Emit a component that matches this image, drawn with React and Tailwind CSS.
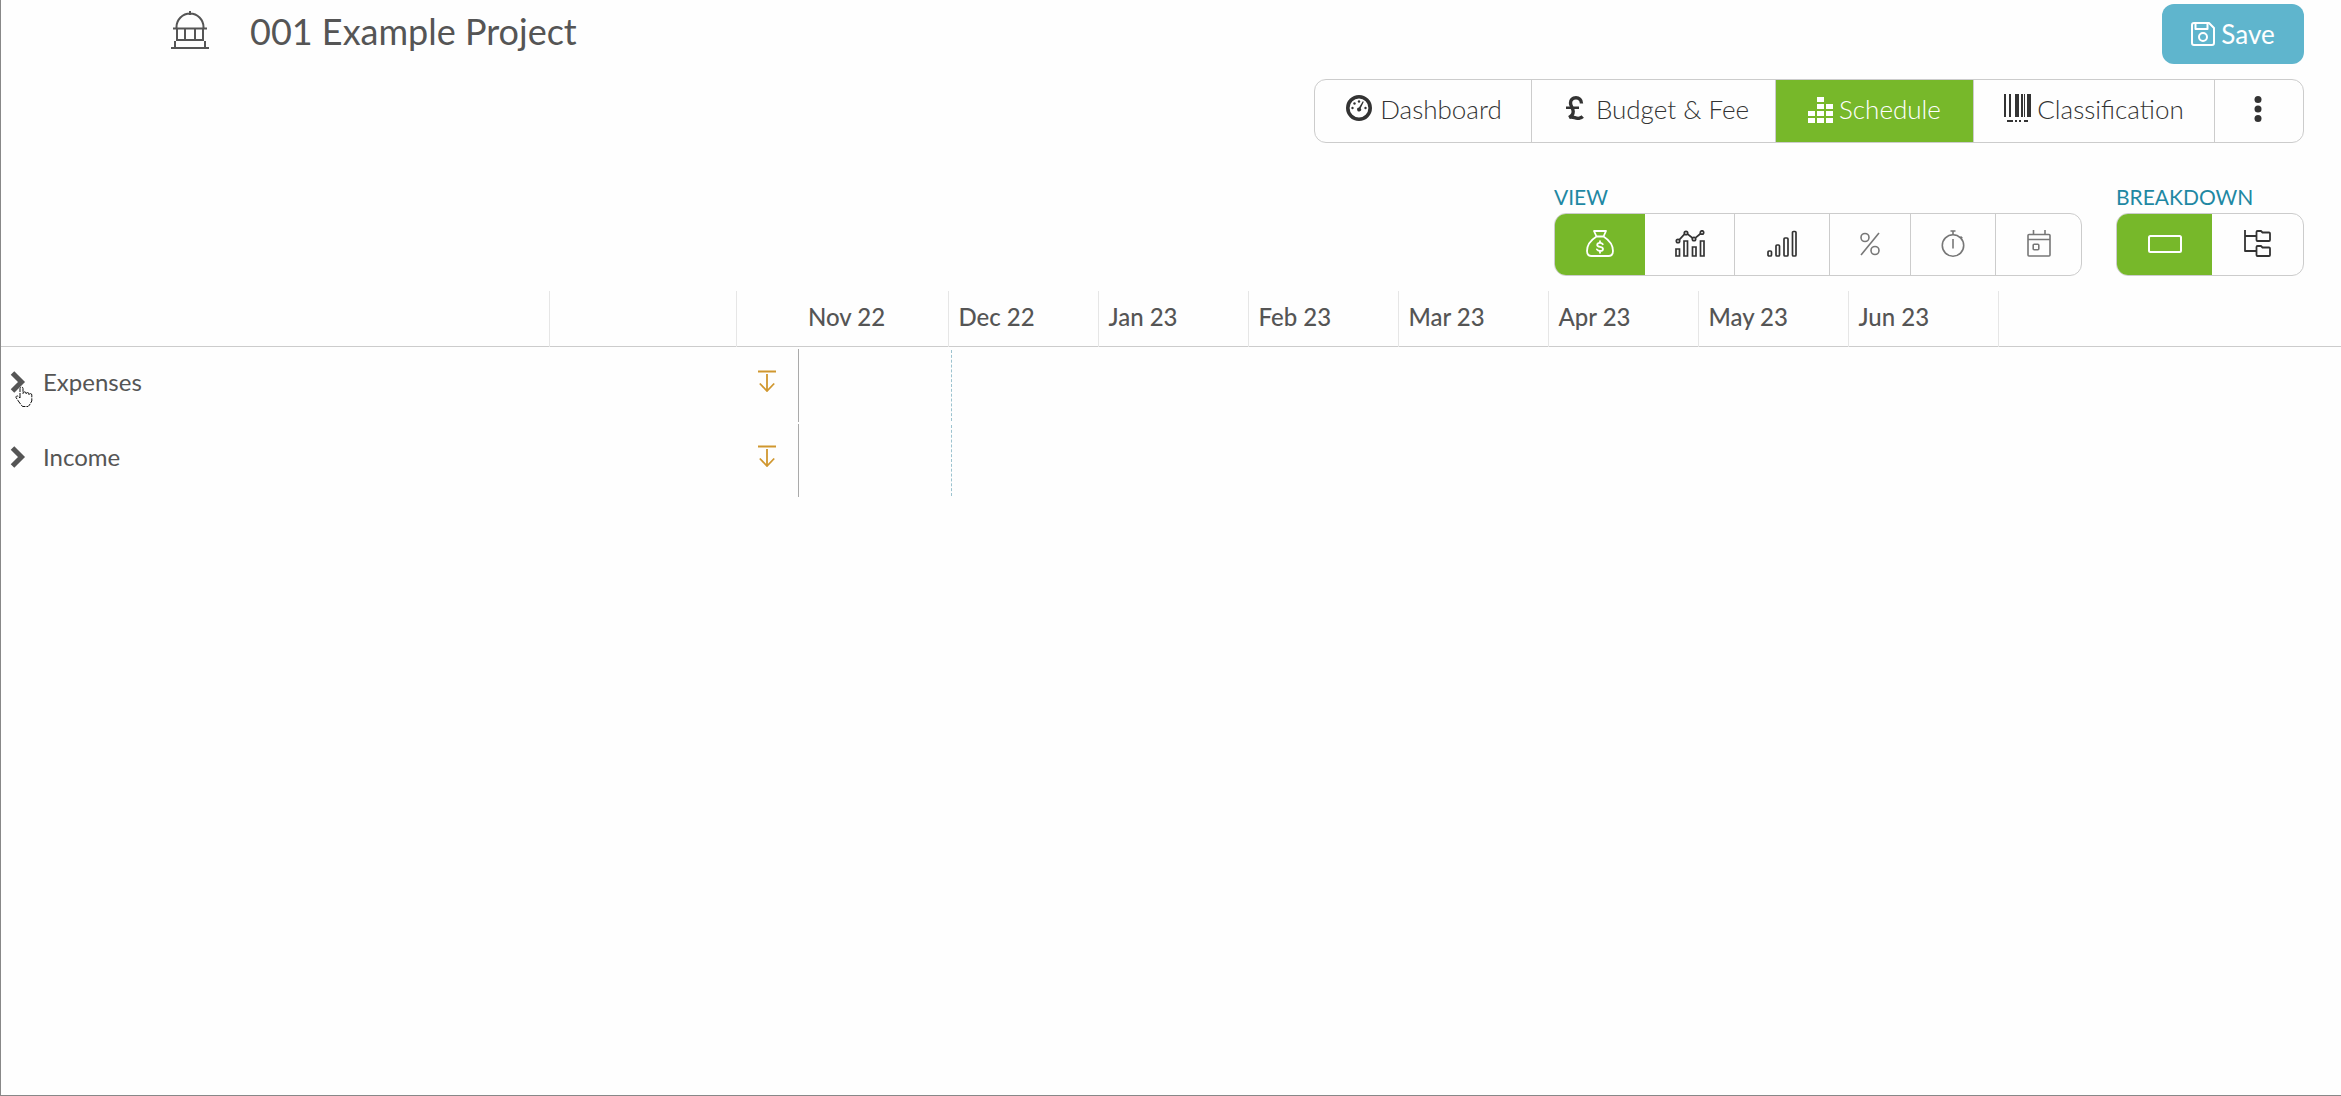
const months = ["Nov 22", "Dec 22", "Jan 23", "Feb 23", "Mar 23", "Apr 23", "May 23", "Jun 23"];

function CapitolIcon() {
  return (
    <svg width="38" height="38" viewBox="0 0 38 38" fill="none" stroke="currentColor" strokeWidth="2" aria-hidden="true">
      <path d="M19 0v4M5.5 17v-1a13.5 13.5 0 0 1 27 0v1M2 17.5h34M6 18v11M14 18v11M24 18v11M32 18v11M5 29h28M4 30v6M34 30v6M0 37h38" />
    </svg>
  );
}

function SaveIcon() {
  return (
    <svg width="24" height="24" viewBox="0 0 24 24" fill="none" stroke="currentColor" strokeWidth="2" strokeLinejoin="round" aria-hidden="true">
      <path d="M3 1h15l5 5v15a2 2 0 0 1-2 2H3a2 2 0 0 1-2-2V3a2 2 0 0 1 2-2z" />
      <path d="M4.500 1v6h12V1" />
      <circle cx="12" cy="15" r="4" />
    </svg>
  );
}

function DashboardIcon() {
  return (
    <svg width="26" height="26" viewBox="0 0 26 26" fill="currentColor" aria-hidden="true">
      <circle cx="13" cy="13" r="11.200" fill="none" stroke="currentColor" strokeWidth="3.600" />
      <circle cx="6.500" cy="13" r="1.200" />
      <circle cx="8.500" cy="8.500" r="1.200" />
      <circle cx="13" cy="6.500" r="1.200" />
      <circle cx="19.500" cy="13" r="1.200" />
      <path d="M16.800 6.200l1 .6-3.100 6.400a2 2 0 1 1-1.700-.8z" />
    </svg>
  );
}

function PoundIcon() {
  return (
    <svg width="18" height="24" viewBox="0 0 18 24" fill="none" stroke="currentColor" strokeWidth="3.400" aria-hidden="true">
      <path d="M15.500 7.500C15.500 3.500 13 1.800 10 1.800 6.500 1.800 4.500 4 4.500 7c0 3.500 2.700 5 2.700 8.500 0 2.500-1 4.500-4.200 6 3.500-2 7 1.800 10.500.7 1.500-.4 2.500-1 3.200-1.700" />
      <path d="M0 11.800h13" strokeWidth="2.600" />
    </svg>
  );
}

function BlocksIcon() {
  return (
    <svg width="25" height="26" viewBox="0 0 25 26" fill="currentColor" aria-hidden="true">
      <path d="M9 0h7v5H9zM9 7h7v5H9zM18 7h7v5h-7zM0 14h7v5H0zM9 14h7v5H9zM18 14h7v5h-7zM0 21h7v5H0zM9 21h7v5H9zM18 21h7v5h-7z" />
    </svg>
  );
}

function BarcodeIcon() {
  return (
    <svg width="27" height="28" viewBox="0 0 27 28" fill="currentColor" aria-hidden="true">
      <path d="M0 0h2v23H0zM5 0h2v23H5zM11 0h4v23h-4zM17 0h2v23h-2zM20 0h1v23h-1zM23 0h4v23h-4zM3 26h6v2H3zM11 26h2v2h-2zM15 26h2v2h-2zM20 26h4v2h-4z" />
    </svg>
  );
}

function MoreIcon() {
  return (
    <svg width="8" height="26" viewBox="0 0 8 26" fill="currentColor" aria-hidden="true">
      <circle cx="4" cy="3.500" r="3.500" />
      <circle cx="4" cy="13" r="3.500" />
      <circle cx="4" cy="22.500" r="3.500" />
    </svg>
  );
}

function MoneyBagIcon() {
  return (
    <svg width="28" height="27" viewBox="0 0 28 27" fill="none" stroke="currentColor" strokeWidth="1.800" strokeLinejoin="round" strokeLinecap="round" aria-hidden="true">
      <path d="M8 1h12l-2.500 5.500h-7zM10.500 6.500C5 10 1 15 1 21c0 3 1.500 5 4.500 5h17c3 0 4.500-2 4.500-5 0-6-4-11-9.500-14.500" />
      <path d="M16.800 14.200c-.6-1-1.500-1.300-2.800-1.300-1.700 0-2.800.8-2.800 2 0 2.800 5.800 1.200 5.800 4 0 1.300-1.200 2.100-3 2.100-1.500 0-2.500-.5-3.100-1.600M14 11.200v1.700M14 21v1.800" />
    </svg>
  );
}

function BarLineIcon() {
  return (
    <svg width="30" height="27" viewBox="0 0 30 27" fill="none" stroke="currentColor" strokeWidth="1.700" aria-hidden="true">
      <path d="M1 26v-7h3.500v7zM9 26V11h3.500v15zM17.500 26v-9H21v9zM25.500 26V11H29v15z" />
      <path d="M4.200 9.800L9.500 4.200M12.700 4.200l4.800 3.800M20.700 7.700l5-4.200" />
      <circle cx="3" cy="11" r="1.700" />
      <circle cx="11" cy="3" r="1.700" />
      <circle cx="19" cy="9" r="1.700" />
      <circle cx="27" cy="2.500" r="1.700" />
    </svg>
  );
}

function SignalIcon() {
  return (
    <svg width="30" height="27" viewBox="0 0 30 27" fill="none" stroke="currentColor" strokeWidth="1.700" aria-hidden="true">
      <rect x="1" y="21" width="3.500" height="5" rx="1" />
      <rect x="9" y="15" width="3.500" height="11" rx="1" />
      <rect x="17" y="8" width="4" height="18" rx="1" />
      <rect x="25.500" y="1.500" width="3.500" height="24.500" rx="1" />
    </svg>
  );
}

function PercentIcon() {
  return (
    <svg width="20" height="24" viewBox="0 0 20 24" fill="none" stroke="currentColor" strokeWidth="1.600" aria-hidden="true">
      <path d="M19 1L1 23" />
      <circle cx="5" cy="5.500" r="4" />
      <circle cx="15" cy="18.500" r="4" />
    </svg>
  );
}

function StopwatchIcon() {
  return (
    <svg width="24" height="27" viewBox="0 0 24 27" fill="none" stroke="currentColor" strokeWidth="1.600" aria-hidden="true">
      <circle cx="12" cy="15.500" r="10.700" />
      <path d="M9.500 1h5M12 1v4M12 9v9.500M19.500 6.500l1.800 1.800" />
    </svg>
  );
}

function CalendarIcon() {
  return (
    <svg width="24" height="27" viewBox="0 0 24 27" fill="none" stroke="currentColor" strokeWidth="1.600" aria-hidden="true">
      <rect x="1" y="4.500" width="22" height="21.500" rx="1" />
      <path d="M1 9.500h22M6.500 0v4.500M18 0v4.500" />
      <rect x="6.200" y="14.200" width="5.600" height="5.600" rx="1" />
    </svg>
  );
}

function RectangleIcon() {
  return (
    <svg width="34" height="18" viewBox="0 0 34 18" fill="none" stroke="currentColor" strokeWidth="2" aria-hidden="true">
      <rect x="1" y="1" width="32" height="16" rx="1.500" />
    </svg>
  );
}

function FolderTreeIcon() {
  return (
    <svg width="27" height="27" viewBox="0 0 27 27" fill="none" stroke="currentColor" strokeWidth="1.800" strokeLinejoin="round" aria-hidden="true">
      <path d="M1 0v21h11M1 6h11" />
      <path d="M12.500 2a1 1 0 0 1 1-1H17l1.500 1.500H25a1 1 0 0 1 1 1V10a1 1 0 0 1-1 1H13.500a1 1 0 0 1-1-1zM12.500 17a1 1 0 0 1 1-1H17l1.500 1.500H25a1 1 0 0 1 1 1V25a1 1 0 0 1-1 1H13.500a1 1 0 0 1-1-1z" />
    </svg>
  );
}

function ChevronIcon() {
  return (
    <svg width="16" height="22" viewBox="0 0 16 22" fill="none" stroke="currentColor" strokeWidth="5" aria-hidden="true">
      <path d="M2.500 2l9 9-9 9" />
    </svg>
  );
}

function DropArrowIcon() {
  return (
    <svg width="18" height="22" viewBox="0 0 18 22" fill="none" stroke="currentColor" strokeWidth="1.800" aria-hidden="true">
      <path d="M0 1.500h18M9 4v17M1.800 13.500L9 21l7.200-7.500" />
    </svg>
  );
}

function HandPointer() {
  return (
    <svg className="pointer-events-none absolute left-3.5 top-[39px]" width="18" height="22" viewBox="0 0 18 22" aria-hidden="true">
      <path
        d="M5 12V2.500a1.500 1.500 0 0 1 3 0V7.500a1.500 1.500 0 0 1 3-.2v.8a1.500 1.500 0 0 1 3 0v.8a1.400 1.400 0 0 1 2.800.2V15l-2.300 4-1.500 1.500H7.500L4 16 1 11.500c-.3-1.300 1.200-2 2.200-1.200z"
        fill="#fefefe"
        stroke="#111"
        strokeWidth="1"
        strokeDasharray="5 1"
      />
    </svg>
  );
}

const tabs = [
  { label: "Dashboard", icon: DashboardIcon, size: "w-[217px] pl-0.5", gap: "gap-2", raise: "pb-1" },
  { label: "Budget & Fee", icon: PoundIcon, size: "w-[244px] pl-2", gap: "gap-3", raise: "pb-1" },
  { label: "Schedule", icon: BlocksIcon, size: "w-[198px]", gap: "gap-1.5", raise: "", active: true },
  { label: "Classification", icon: BarcodeIcon, size: "w-[241px]", gap: "gap-1.5", raise: "pb-1" },
];

const views = [
  { label: "Money", icon: MoneyBagIcon, style: "w-[90px] bg-[#77b82a] text-white" },
  { label: "Chart", icon: BarLineIcon, style: "w-[89px] text-[#333]" },
  { label: "Levels", icon: SignalIcon, style: "w-[95px] border-l border-[#ccc] text-[#333]" },
  { label: "Percent", icon: PercentIcon, style: "w-[81px] border-l border-[#ccc] text-[#777]" },
  { label: "Time", icon: StopwatchIcon, style: "w-[85px] border-l border-[#ccc] text-[#777]" },
  { label: "Calendar", icon: CalendarIcon, style: "w-[86px] border-l border-[#ccc] text-[#777]" },
];

const breakdowns = [
  { label: "Flat", icon: RectangleIcon, style: "w-[95px] bg-[#77b82a] text-white" },
  { label: "Tree", icon: FolderTreeIcon, style: "w-[91px] text-[#333]" },
];

function ButtonGroup({ title, items }) {
  return (
    <section aria-label={title}>
      <h2 className="text-[21px] leading-8 text-[#1f88a3]">{title}</h2>
      <div className="flex h-[63px] overflow-hidden rounded-xl border border-[#ccc]">
        {items.map(({ label, icon: Icon, style }) => (
          <button key={label} type="button" aria-label={label} className={`flex items-center justify-center pb-0.5 ${style}`}>
            <Icon />
          </button>
        ))}
      </div>
    </section>
  );
}

function ScheduleRow({ label, pointer }) {
  return (
    <tr className="h-[75px]">
      <th scope="row" colSpan="2" className="relative p-0 pb-1 pl-[9px] text-left font-normal">
        <button type="button" className="flex items-center gap-[17px]">
          <ChevronIcon />
          <span>{label}</span>
        </button>
        {pointer && <HandPointer />}
      </th>
      <td className="p-0 pb-1.5">
        <button type="button" aria-label={`Fill ${label}`} className="ml-[22px] block text-[#d0972f]">
          <DropArrowIcon />
        </button>
      </td>
      <td className="p-0 pt-0.5">
        <div className="h-[73px] border-l border-[#aaa]" />
      </td>
      <td className="p-0 pt-0.5">
        <div className="ml-[3px] h-[71px] border-l border-dashed border-[#9cc3cf]" />
      </td>
      <td colSpan="7" />
    </tr>
  );
}

export default function App() {
  return (
    <div className="flex min-h-screen flex-col border-b border-l border-[#888] bg-[#fefefe] font-['Lato',sans-serif] text-[#555]">
      <header className="flex items-start justify-between pl-[170px] pr-[37px] pt-1">
        <div className="flex items-start gap-[41px]">
          <div className="pt-[7px]">
            <CapitolIcon />
          </div>
          <h1 className="text-4xl leading-[54px]">001 Example Project</h1>
        </div>
        <button type="button" className="flex h-[60px] w-[142px] items-center justify-center gap-1.5 rounded-xl bg-[#5fb5cd] text-[26px] text-white">
          <SaveIcon />
          Save
        </button>
      </header>

      <nav className="mt-[15px] flex justify-end pr-[37px]">
        <div className="flex h-16 overflow-hidden rounded-xl border border-[#ccc] text-[26px] font-light text-[#333]">
          {tabs.map(({ label, icon: Icon, size, gap, raise, active }) => (
            <button
              key={label}
              type="button"
              className={`flex items-center justify-center border-r border-[#ccc] pb-[3px] ${size} ${gap} ${active ? "bg-[#77b82a] text-white" : ""}`}
            >
              <span className={raise}>
                <Icon />
              </span>
              {label}
            </button>
          ))}
          <button type="button" aria-label="More" className="flex w-[88px] items-center justify-center pb-1 pr-0.5">
            <MoreIcon />
          </button>
        </div>
      </nav>

      <div className="mt-[38px] flex justify-end gap-[34px] pr-[37px]">
        <ButtonGroup title="VIEW" items={views} />
        <ButtonGroup title="BREAKDOWN" items={breakdowns} />
      </div>

      <table className="mt-[15px] w-full table-fixed border-collapse text-2xl">
        <colgroup>
          <col className="w-[548px]" />
          <col className="w-[187px]" />
          <col className="w-[62px]" />
          {months.map((m) => (
            <col key={m} className="w-[150px]" />
          ))}
          <col />
        </colgroup>
        <thead>
          <tr className="h-[55px] border-b border-[#ccc]">
            <td />
            <td className="border-l border-[#e6e6e6]" />
            <td className="border-l border-[#e6e6e6]" />
            {months.map((m, i) => (
              <th key={m} scope="col" className={`p-0 pb-[3px] pl-2.5 text-left font-medium ${i > 0 ? "border-l border-[#e6e6e6]" : ""}`}>
                {m}
              </th>
            ))}
            <td className="border-l border-[#e6e6e6]" />
          </tr>
        </thead>
        <tbody>
          <ScheduleRow label="Expenses" pointer />
          <ScheduleRow label="Income" />
        </tbody>
      </table>
    </div>
  );
}
